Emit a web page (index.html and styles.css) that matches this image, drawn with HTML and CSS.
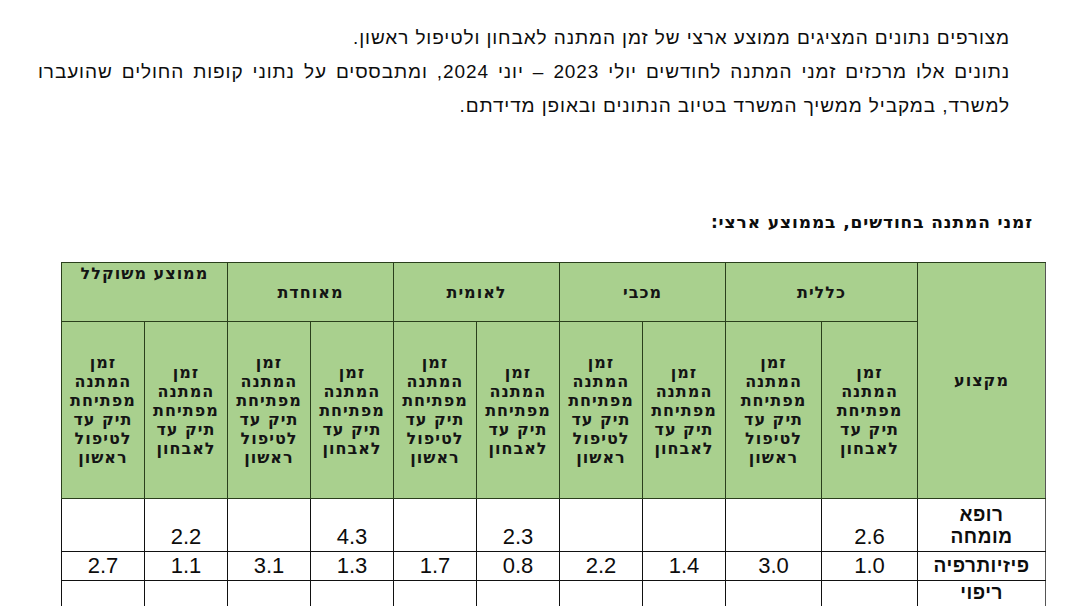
FILE: index.html
```html
<!DOCTYPE html>
<html lang="he" dir="rtl">
<head>
<meta charset="utf-8">
<title>זמני המתנה</title>
<link rel="stylesheet" href="styles.css">
</head>
<body>
<main class="page">
  <p class="intro">מצורפים נתונים המציגים ממוצע ארצי של זמן המתנה לאבחון ולטיפול ראשון.</p>
  <p class="intro">נתונים אלו מרכזים זמני המתנה לחודשים יולי 2023 – יוני 2024, ומתבססים על נתוני קופות החולים שהועברו למשרד, במקביל ממשיך המשרד בטיוב הנתונים ובאופן מדידתם.</p>

  <h2 class="title">זמני המתנה בחודשים, בממוצע ארצי:</h2>

  <table class="waits">
    <colgroup>
      <col class="c-prof">
      <col class="c-wide"><col class="c-wide">
      <col class="c-n"><col class="c-n">
      <col class="c-n"><col class="c-n">
      <col class="c-n"><col class="c-n">
      <col class="c-n"><col class="c-n">
    </colgroup>
    <thead>
      <tr class="groups">
        <th rowspan="2" class="prof-head">מקצוע</th>
        <th colspan="2">כללית</th>
        <th colspan="2">מכבי</th>
        <th colspan="2">לאומית</th>
        <th colspan="2">מאוחדת</th>
        <th colspan="2" class="top">ממוצע משוקלל</th>
      </tr>
      <tr class="subs">
        <th>זמן<br>המתנה<br>מפתיחת<br>תיק עד<br>לאבחון</th>
        <th>זמן<br>המתנה<br>מפתיחת<br>תיק עד<br>לטיפול<br>ראשון</th>
        <th>זמן<br>המתנה<br>מפתיחת<br>תיק עד<br>לאבחון</th>
        <th>זמן<br>המתנה<br>מפתיחת<br>תיק עד<br>לטיפול<br>ראשון</th>
        <th>זמן<br>המתנה<br>מפתיחת<br>תיק עד<br>לאבחון</th>
        <th>זמן<br>המתנה<br>מפתיחת<br>תיק עד<br>לטיפול<br>ראשון</th>
        <th>זמן<br>המתנה<br>מפתיחת<br>תיק עד<br>לאבחון</th>
        <th>זמן<br>המתנה<br>מפתיחת<br>תיק עד<br>לטיפול<br>ראשון</th>
        <th>זמן<br>המתנה<br>מפתיחת<br>תיק עד<br>לאבחון</th>
        <th>זמן<br>המתנה<br>מפתיחת<br>תיק עד<br>לטיפול<br>ראשון</th>
      </tr>
    </thead>
    <tbody>
      <tr class="tall">
        <th class="prof">רופא<br>מומחה</th>
        <td>2.6</td><td></td>
        <td></td><td></td>
        <td>2.3</td><td></td>
        <td>4.3</td><td></td>
        <td>2.2</td><td></td>
      </tr>
      <tr class="short">
        <th class="prof">פיזיותרפיה</th>
        <td>1.0</td><td>3.0</td>
        <td>1.4</td><td>2.2</td>
        <td>0.8</td><td>1.7</td>
        <td>1.3</td><td>3.1</td>
        <td>1.1</td><td>2.7</td>
      </tr>
      <tr class="tall last">
        <th class="prof">ריפוי<br>בעיסוק</th>
        <td>3.3</td><td>3.4</td>
        <td>3.1</td><td>5.4</td>
        <td>1.6</td><td>2.6</td>
        <td>3.1</td><td>7.6</td>
        <td>2.6</td><td>5.6</td>
      </tr>
    </tbody>
  </table>
</main>
</body>
</html>
```

FILE: styles.css
```css
html, body {
  margin: 0;
  padding: 0;
  background: #ffffff;
}

body {
  font-family: "Liberation Sans", "DejaVu Sans", sans-serif;
  color: #0d0d0d;
}

.page {
  direction: rtl;
  padding: 21px 34px 0 38px;
}

.intro {
  margin: 0 36px 0 0;
  font-size: 19px;
  letter-spacing: 0.9px;
  line-height: 34px;
  text-align: justify;
}

.title {
  margin: 87px 13px 28px 0;
  font-family: "DejaVu Sans", sans-serif;
  font-size: 17px;
  letter-spacing: 0.9px;
  font-weight: bold;
  line-height: 24px;
}

.waits {
  width: 985px;
  table-layout: fixed;
  border-collapse: collapse;
}

.c-prof { width: 128px; }
.c-wide { width: 96px; }
.c-n { width: 83px; }

.waits thead th {
  background: #a9d08e;
  border: 1px solid #2a3f1c;
  font-family: "DejaVu Sans", sans-serif;
  font-weight: bold;
  font-size: 16px;
  letter-spacing: 1px;
  color: #141414;
  padding: 0;
  text-align: center;
  vertical-align: middle;
}

.groups th {
  height: 57px;
}

.groups th.top {
  vertical-align: top;
  padding-top: 1px;
}

.subs th {
  height: 176px;
  line-height: 19px;
}

.waits tbody td,
.waits tbody th {
  border: 1px solid #111111;
  padding: 0;
  text-align: center;
}

.waits tbody td {
  font-size: 22px;
  line-height: 28px;
  vertical-align: bottom;
  color: #0d0d0d;
}

.waits tbody th.prof {
  font-size: 19px;
  letter-spacing: 0.5px;
  font-weight: bold;
  line-height: 22px;
  vertical-align: bottom;
  padding-bottom: 3px;
}

.waits tbody .last th.prof {
  vertical-align: top;
  padding: 1px 0 0;
}

.tall td {
  height: 52px;
}

.short td {
  height: 28px;
}

.waits tr > :first-child {
  border-right-color: #555555;
}
```
